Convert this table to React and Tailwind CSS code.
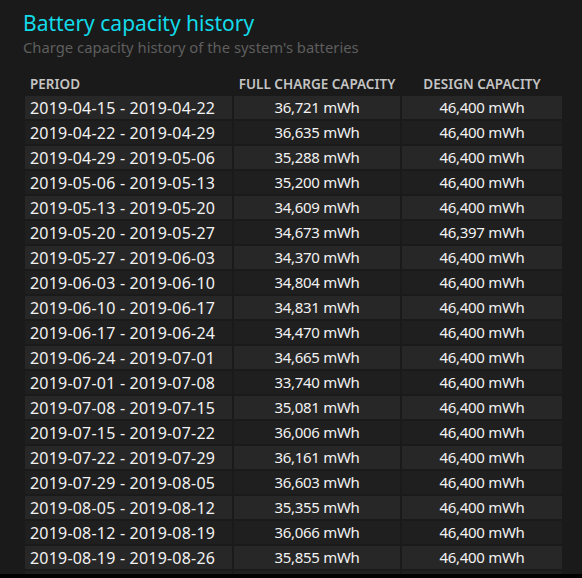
import React from "react";

const rows = [
  ["2019-04-15 - 2019-04-22", "36,721 mWh", "46,400 mWh"],
  ["2019-04-22 - 2019-04-29", "36,635 mWh", "46,400 mWh"],
  ["2019-04-29 - 2019-05-06", "35,288 mWh", "46,400 mWh"],
  ["2019-05-06 - 2019-05-13", "35,200 mWh", "46,400 mWh"],
  ["2019-05-13 - 2019-05-20", "34,609 mWh", "46,400 mWh"],
  ["2019-05-20 - 2019-05-27", "34,673 mWh", "46,397 mWh"],
  ["2019-05-27 - 2019-06-03", "34,370 mWh", "46,400 mWh"],
  ["2019-06-03 - 2019-06-10", "34,804 mWh", "46,400 mWh"],
  ["2019-06-10 - 2019-06-17", "34,831 mWh", "46,400 mWh"],
  ["2019-06-17 - 2019-06-24", "34,470 mWh", "46,400 mWh"],
  ["2019-06-24 - 2019-07-01", "34,665 mWh", "46,400 mWh"],
  ["2019-07-01 - 2019-07-08", "33,740 mWh", "46,400 mWh"],
  ["2019-07-08 - 2019-07-15", "35,081 mWh", "46,400 mWh"],
  ["2019-07-15 - 2019-07-22", "36,006 mWh", "46,400 mWh"],
  ["2019-07-22 - 2019-07-29", "36,161 mWh", "46,400 mWh"],
  ["2019-07-29 - 2019-08-05", "36,603 mWh", "46,400 mWh"],
  ["2019-08-05 - 2019-08-12", "35,355 mWh", "46,400 mWh"],
  ["2019-08-12 - 2019-08-19", "36,066 mWh", "46,400 mWh"],
  ["2019-08-19 - 2019-08-26", "35,855 mWh", "46,400 mWh"],
  // cut off by the bottom edge, only its top shows
  ["", "", ""],
];

export default function App() {
  return (
    <div className="w-[582px] h-[578px] bg-black" style={{ fontFamily: '"Noto Sans", "Open Sans", sans-serif' }}>
      <div className="h-[574px] bg-[#1a1a1a] overflow-hidden pl-[23px] pt-[9px]">
        <h1 className="text-[21px] leading-[28px] text-[#12dbea]">Battery capacity history</h1>
        <p className="text-[14.8px] leading-[20px] text-[#5e5e5e]">
          Charge capacity history of the system's batteries
        </p>

        <div className="ml-[2px] mt-[14px] grid grid-cols-[207px_166px_160px] gap-[2px]">
          <div className="h-[23px] flex items-end px-[5px] text-[13.5px] font-semibold text-[#c4c4c4]">PERIOD</div>
          <div className="h-[23px] flex items-end justify-center text-[13.5px] font-semibold text-[#c4c4c4]">FULL CHARGE CAPACITY</div>
          <div className="h-[23px] flex items-end justify-center text-[13.5px] font-semibold text-[#c4c4c4]">DESIGN CAPACITY</div>

          {rows.map((r, i) => {
            const bg = i % 2 === 0 ? "bg-[#272727]" : "bg-[#1f1f1f]";
            return (
              <React.Fragment key={i}>
                <div className={`${bg} h-[23px] flex items-center px-[5px] text-[16px] tracking-[0.2px] text-[#f2f2f2]`}>{r[0]}</div>
                <div className={`${bg} h-[23px] flex items-center justify-center text-[15px] tracking-[-0.3px] text-[#f2f2f2]`}>{r[1]}</div>
                <div className={`${bg} h-[23px] flex items-center justify-center text-[15px] tracking-[-0.3px] text-[#f2f2f2]`}>{r[2]}</div>
              </React.Fragment>
            );
          })}
        </div>
      </div>
    </div>
  );
}
